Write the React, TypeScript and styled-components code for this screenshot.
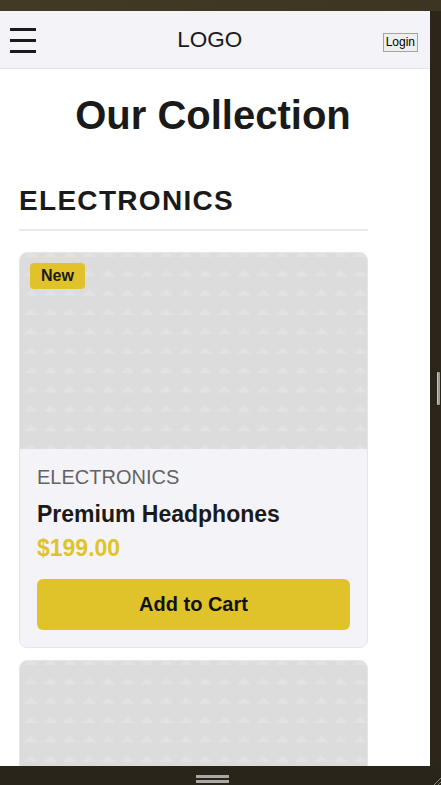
import React from 'react';
import styled, { createGlobalStyle } from 'styled-components';

const GlobalStyle = createGlobalStyle`
  html, body {
    margin: 0;
    padding: 0;
    width: 441px;
    height: 785px;
    overflow: hidden;
    background: #2b2619;
  }
  * { box-sizing: border-box; }
`;

const YELLOW = '#e0c32a';
const FONT = `"Liberation Sans", Arial, sans-serif`;

// device frame around the page
const Frame = styled.div`
  display: grid;
  grid-template-columns: 430px 11px;
  grid-template-rows: 11px 755px 19px;
  width: 441px;
  height: 785px;
`;

const TopBar = styled.div`
  grid-column: 1 / 3;
  background: linear-gradient(90deg, #433a25, #3d3522);
`;

const Viewport = styled.div`
  overflow: hidden;
  background: #ffffff;
  font-family: ${FONT};
  color: #1a1a1a;
`;

const SideStrip = styled.div`
  background: #2b2619;
  display: flex;
  justify-content: flex-end;
  padding-right: 1px;
`;

const ScrollThumb = styled.div`
  margin-top: 361px;
  width: 3px;
  height: 33px;
  border-radius: 1px;
  background: #9a9a9a;
  border-left: 1px solid #c4c4c4;
`;

const BottomBar = styled.div`
  grid-column: 1 / 3;
  background: #29251a;
  display: flex;
  justify-content: center;
  align-items: flex-start;
  padding: 9px 16px 0 0;
  position: relative;
`;

const Handle = styled.div`
  display: flex;
  flex-direction: column;
  gap: 2px;
`;

const HandleLine = styled.div`
  width: 33px;
  height: 3px;
  background: #a9a8a4;
`;

const Grip = styled.svg`
  position: absolute;
  right: 0;
  bottom: 0;
`;

// page header
const Header = styled.header`
  height: 58px;
  display: flex;
  align-items: center;
  justify-content: space-between;
  padding: 0 12px 0 10px;
  background: #f3f3f8;
  border-bottom: 1px solid #e6e6ea;
`;

const MenuButton = styled.div`
  display: flex;
  width: 27px;
  padding-top: 1px;
`;

const Logo = styled.div`
  font-size: 22.5px;
  padding-top: 1px;
`;

const LoginButton = styled.button`
  margin-top: 6px;
  font-family: ${FONT};
  font-size: 12px;
  line-height: 15px;
  padding: 1px 2px;
  color: #000;
  background: #efefef;
  border: 1px solid #a3a3a3;
  border-radius: 0;
`;

const Main = styled.main`
  padding: 24px 19px 0;
`;

const PageTitle = styled.h1`
  margin: 0 0 47px;
  font-size: 40px;
  font-weight: 700;
  text-align: center;
  padding-right: 4px;
`;

const Section = styled.section`
  width: 349px;
`;

const SectionTitle = styled.h2`
  margin: 0 0 21px;
  padding: 0 0 12px;
  font-size: 28px;
  font-weight: 700;
  letter-spacing: 1.3px;
  border-bottom: 2px solid #e9e9ec;
`;

const CardList = styled.div`
  display: flex;
  flex-direction: column;
  gap: 12px;
`;

const Card = styled.article`
  background: #f4f4f8;
  border: 1px solid #e6e6ea;
  border-radius: 8px;
  overflow: hidden;
`;

const ImageArea = styled.div`
  position: relative;
  height: 196px;
  background: #dcdcdc;
`;

const Pattern = styled.svg`
  display: block;
  width: 100%;
  height: 100%;
`;

const Badge = styled.span`
  position: absolute;
  top: 10px;
  left: 10px;
  padding: 4px 11px;
  font-size: 16px;
  font-weight: 700;
  background: ${YELLOW};
  border-radius: 4px;
`;

const CardBody = styled.div`
  padding: 17px;
`;

const Category = styled.div`
  font-size: 20px;
  color: #636363;
  margin-bottom: 12px;
`;

const ProductName = styled.h3`
  margin: 0 0 7px;
  font-size: 23px;
  font-weight: 700;
`;

const Price = styled.div`
  font-size: 23px;
  font-weight: 700;
  color: ${YELLOW};
  margin-bottom: 17px;
`;

const CartButton = styled.button`
  display: block;
  width: 100%;
  padding: 14px 0;
  font-family: ${FONT};
  font-size: 20px;
  font-weight: 700;
  line-height: 23px;
  color: #111;
  background: ${YELLOW};
  border: none;
  border-radius: 6px;
`;

type Product = {
  id: number;
  category: string;
  name: string;
  price: string;
  isNew: boolean;
};

const products: Product[] = [
  { id: 1, category: 'ELECTRONICS', name: 'Premium Headphones', price: '$199.00', isNew: true },
];

function TrianglePattern({ id }: { id: string }) {
  return (
    <Pattern>
      <defs>
        <pattern id={id} width="19.35" height="19.35" patternUnits="userSpaceOnUse" x="1" y="4">
          <polygon points="3,19.35 10,13 17,19.35" fill="#e2e2e2" />
        </pattern>
      </defs>
      <rect width="100%" height="100%" fill={`url(#${id})`} />
    </Pattern>
  );
}

export default function App() {
  return (
    <>
      <GlobalStyle />
      <Frame>
        <TopBar />
        <Viewport>
          <Header>
            <MenuButton>
              <svg width="27" height="26" viewBox="0 0 27 26">
                <rect x="0" y="1" width="26" height="3" fill="#1a1a1a" />
                <rect x="0" y="12" width="26" height="3" fill="#1a1a1a" />
                <rect x="0" y="23" width="26" height="3" fill="#1a1a1a" />
              </svg>
            </MenuButton>
            <Logo>LOGO</Logo>
            <LoginButton>Login</LoginButton>
          </Header>

          <Main>
            <PageTitle>Our Collection</PageTitle>
            <Section>
              <SectionTitle>ELECTRONICS</SectionTitle>
              <CardList>
                {products.map((p) => (
                  <Card key={p.id}>
                    <ImageArea>
                      <TrianglePattern id={`tri-${p.id}`} />
                      {p.isNew && <Badge>New</Badge>}
                    </ImageArea>
                    <CardBody>
                      <Category>{p.category}</Category>
                      <ProductName>{p.name}</ProductName>
                      <Price>{p.price}</Price>
                      <CartButton>Add to Cart</CartButton>
                    </CardBody>
                  </Card>
                ))}
                <Card>
                  <ImageArea>
                    <TrianglePattern id="tri-next" />
                  </ImageArea>
                </Card>
              </CardList>
            </Section>
          </Main>
        </Viewport>
        <SideStrip>
          <ScrollThumb />
        </SideStrip>
        <BottomBar>
          <Handle>
            <HandleLine />
            <HandleLine />
          </Handle>
          <Grip width="8" height="8" viewBox="0 0 8 8">
            <line x1="8" y1="1" x2="1" y2="8" stroke="#8a877e" strokeWidth="1" />
            <line x1="8" y1="5" x2="5" y2="8" stroke="#8a877e" strokeWidth="1" />
          </Grip>
        </BottomBar>
      </Frame>
    </>
  );
}
